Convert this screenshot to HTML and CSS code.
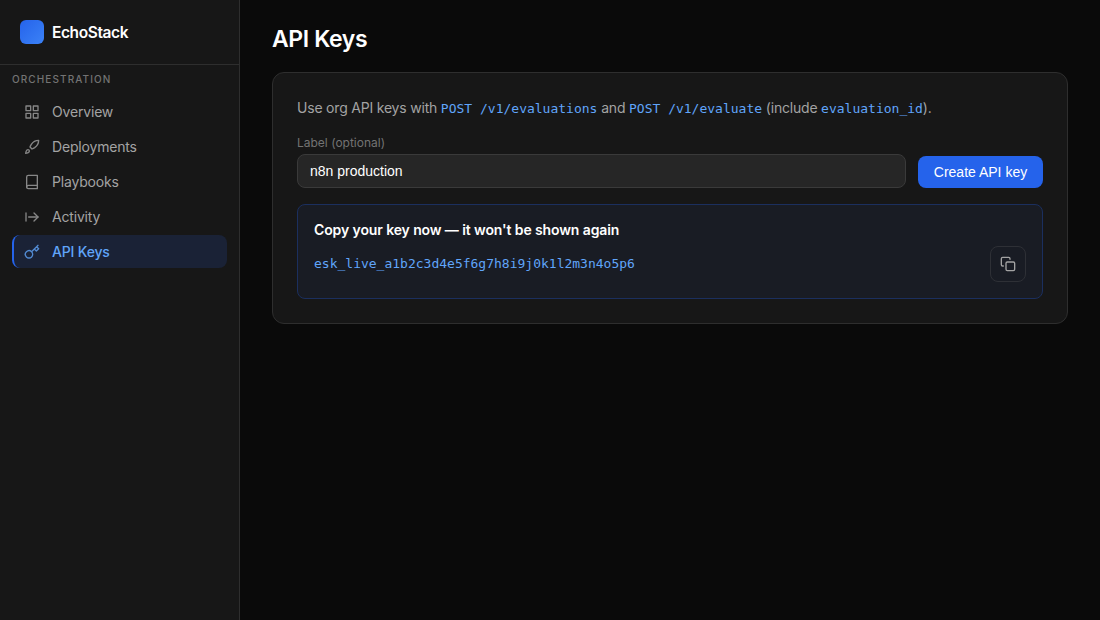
FILE: index.html
```html
<!DOCTYPE html>
<html lang="en">
<head>
<meta charset="UTF-8" />
<meta name="viewport" content="width=device-width, initial-scale=1" />
<title>API Keys - EchoStack</title>
<link rel="stylesheet" href="styles.css">
</head>
<body>
<div class="app">
  <aside class="sidebar">
    <div class="brand">
      <div class="brand-logo"></div>
      <span class="brand-name">EchoStack</span>
    </div>
    <div class="nav-title">Orchestration</div>
    <nav class="nav">
      <a class="nav-item" href="#">
        <svg class="icon" viewBox="0 0 24 24"><rect x="3" y="3" width="7" height="7"/><rect x="14" y="3" width="7" height="7"/><rect x="14" y="14" width="7" height="7"/><rect x="3" y="14" width="7" height="7"/></svg>
        <span>Overview</span>
      </a>
      <a class="nav-item" href="#">
        <svg class="icon" viewBox="0 0 24 24"><path d="M4.5 16.5c-1.5 1.26-2 5-2 5s3.74-.5 5-2c.71-.84.7-2.13-.09-2.91a2.18 2.18 0 0 0-2.91-.09z"/><path d="M12 15l-3-3a22 22 0 0 1 2-3.95A12.88 12.88 0 0 1 22 2c0 2.72-.78 7.5-6 11a22.35 22.35 0 0 1-4 2z"/></svg>
        <span>Deployments</span>
      </a>
      <a class="nav-item" href="#">
        <svg class="icon" viewBox="0 0 24 24"><path d="M4 19.5A2.5 2.5 0 0 1 6.5 17H20"/><path d="M6.5 2H20v20H6.5A2.5 2.5 0 0 1 4 19.5v-15A2.5 2.5 0 0 1 6.5 2z"/></svg>
        <span>Playbooks</span>
      </a>
      <a class="nav-item" href="#">
        <svg class="icon" viewBox="0 0 24 24"><path d="M3 6v12"/><path d="M7 12h14"/><path d="M15 6l6 6-6 6"/></svg>
        <span>Activity</span>
      </a>
      <a class="nav-item active" href="#">
        <svg class="icon" viewBox="0 0 24 24"><path d="M21 2l-2 2m-7.61 7.61a5.5 5.5 0 1 1-7.778 7.778 5.5 5.5 0 0 1 7.777-7.777zm0 0L15.5 7.5m0 0l3 3L22 7l-3-3m-3.5 3.5L19 4"/></svg>
        <span>API Keys</span>
      </a>
    </nav>
  </aside>

  <main class="main">
    <h1>API Keys</h1>
    <section class="card">
      <p class="hint">Use org API keys with <code>POST /v1/evaluations</code> and <code>POST /v1/evaluate</code> (include <code>evaluation_id</code>).</p>

      <div class="form-row">
        <div class="field">
          <label for="keyLabel">Label (optional)</label>
          <input type="text" id="keyLabel" value="n8n production" />
        </div>
        <button class="btn-primary">Create API key</button>
      </div>

      <div class="key-box">
        <div class="key-title">Copy your key now — it won't be shown again</div>
        <div class="key-row">
          <code>esk_live_a1b2c3d4e5f6g7h8i9j0k1l2m3n4o5p6</code>
          <button class="btn-copy" aria-label="Copy key">
            <svg class="icon" viewBox="0 0 24 24"><rect x="9" y="9" width="13" height="13" rx="2"/><path d="M5 15H4a2 2 0 0 1-2-2V4a2 2 0 0 1 2-2h9a2 2 0 0 1 2 2v1"/></svg>
          </button>
        </div>
      </div>
    </section>
  </main>
</div>
</body>
</html>
```

FILE: styles.css
```css
* {
  box-sizing: border-box;
}
body {
  margin: 0;
  font-family: Inter, sans-serif;
  font-size: 14px;
  background: #0a0a0a;
  color: #fff;
}
.app {
  display: flex;
  min-height: 100vh;
}

/* Sidebar */
.sidebar {
  width: 240px;
  flex-shrink: 0;
  background: #171717;
  border-right: 1px solid #2e2e2e;
}
.brand {
  display: flex;
  align-items: center;
  gap: 8px;
  height: 65px;
  padding: 0 20px;
  border-bottom: 1px solid #2e2e2e;
}
.brand-logo {
  width: 24px;
  height: 24px;
  border-radius: 6px;
  background: linear-gradient(135deg, #2563eb, #3b82f6);
}
.brand-name {
  padding-top: 1px;
  font-size: 15.5px;
  font-weight: 600;
  line-height: 24px;
  letter-spacing: -0.4px;
}
.nav-title {
  padding: 7px 12px 9px;
  font-size: 10px;
  line-height: 14px;
  font-weight: 500;
  letter-spacing: 1.1px;
  text-transform: uppercase;
  color: #737373;
}
.nav {
  display: flex;
  flex-direction: column;
  gap: 2px;
  padding: 0 12px;
}
.nav-item {
  display: flex;
  align-items: center;
  gap: 12px;
  padding: 8px 10px;
  border-left: 2px solid transparent;
  border-radius: 8px;
  line-height: 17px;
  letter-spacing: -0.18px;
  color: #a3a3a3;
  text-decoration: none;
}
.nav-item.active {
  background: #1a2236;
  border-left-color: #2563eb;
  color: #60a5fa;
  font-weight: 500;
}
.icon {
  width: 16px;
  height: 16px;
  flex-shrink: 0;
  fill: none;
  stroke: currentColor;
  stroke-width: 2;
  stroke-linecap: round;
  stroke-linejoin: round;
}
.nav-item .icon {
  opacity: 0.8;
}

/* Content */
.main {
  flex: 1;
  padding: 24px 32px;
}
h1 {
  margin: 0 0 18px;
  font-size: 23px;
  line-height: 30px;
  font-weight: 600;
  letter-spacing: -0.4px;
}
.card {
  padding: 24px;
  background: #171717;
  border: 1px solid #2e2e2e;
  border-radius: 12px;
}
code {
  font-family: "DejaVu Sans Mono", monospace;
  font-size: 13px;
  letter-spacing: 0;
  color: #60a5fa;
}
.hint {
  margin: 0 0 15px;
  line-height: 22px;
  letter-spacing: -0.2px;
  color: #a3a3a3;
}
.form-row {
  display: flex;
  align-items: flex-end;
  gap: 12px;
  margin-bottom: 16px;
}
.field {
  flex: 1;
}
.field label {
  display: block;
  margin-bottom: 4px;
  font-size: 12px;
  line-height: 15px;
  color: #737373;
}
.field input {
  display: block;
  width: 100%;
  height: 34px;
  padding: 8px 12px;
  font-family: "Liberation Sans", Arial, sans-serif;
  font-size: 14px;
  color: #fff;
  background: #262626;
  border: 1px solid #3a3a3a;
  border-radius: 8px;
}
.btn-primary {
  width: 125px;
  height: 32px;
  padding: 0;
  font-family: "Liberation Sans", Arial, sans-serif;
  font-size: 14px;
  color: #fff;
  background: #2563eb;
  border: none;
  border-radius: 8px;
  cursor: pointer;
}
.key-box {
  padding: 16px;
  background: #191c24;
  border: 1px solid #1b2f5e;
  border-radius: 8px;
}
.key-title {
  margin-bottom: 8px;
  line-height: 17px;
  font-weight: 600;
  letter-spacing: -0.11px;
}
.key-row {
  display: flex;
  align-items: flex-start;
  justify-content: space-between;
}
.key-row code {
  line-height: 36px;
}
.btn-copy {
  display: flex;
  align-items: center;
  justify-content: center;
  width: 36px;
  height: 36px;
  padding: 0;
  color: #a3a3a3;
  background: none;
  border: 1px solid #2e3036;
  border-radius: 8px;
  cursor: pointer;
}
```
